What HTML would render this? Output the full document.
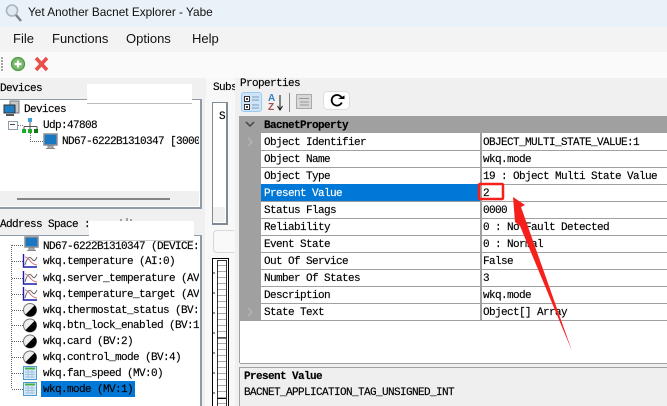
<!DOCTYPE html>
<html><head><meta charset="utf-8">
<style>
html,body{margin:0;padding:0;width:667px;height:406px;overflow:hidden;background:#f0f0f0}
#r{position:relative;width:667px;height:406px;overflow:hidden;background:#f0f0f0}
.a{position:absolute}
.m{position:absolute;margin-top:1px;font-family:"Liberation Mono",monospace;font-size:11px;letter-spacing:-.6px;line-height:14px;height:14px;color:#000;white-space:pre;-webkit-text-stroke:.15px #000}
.s{position:absolute;font-family:"Liberation Sans",sans-serif;color:#111;white-space:pre}
.line{position:absolute;background:#a0a0a0}
svg{position:absolute;overflow:visible}
.b{font-weight:bold}
</style></head><body><div id="r">
<div class="a" style="left:0;top:0;width:667px;height:27px;background:#e9f2f9"></div>
<div class="a" style="left:0;top:27px;width:667px;height:25px;background:#f3f3f3"></div>
<div class="a" style="left:0;top:52px;width:667px;height:26px;background:#fafafa"></div>

<svg style="left:4px;top:3px" width="18" height="20" viewBox="0 0 18 20"><circle cx="8" cy="7.5" r="5.5" fill="#dfe9f0" stroke="#a9b4bc" stroke-width="1.6"/><path d="M12 12l5 6" stroke="#7d8288" stroke-width="2.5"/></svg>
<div class="s" style="left:28px;top:4px;font-size:11.8px;line-height:16px">Yet Another Bacnet Explorer - Yabe</div>
<div class="s" style="left:13px;top:31px;font-size:13px;line-height:16px">File</div>
<div class="s" style="left:52px;top:31px;font-size:13px;line-height:16px">Functions</div>
<div class="s" style="left:126px;top:31px;font-size:13px;line-height:16px">Options</div>
<div class="s" style="left:192px;top:31px;font-size:13px;line-height:16px">Help</div>

<svg style="left:0;top:52px" width="60" height="26" viewBox="0 0 60 26">
<path d="M2 5v14" stroke="#a8a8a8" stroke-width="2" stroke-dasharray="2 1"/>
<circle cx="18" cy="12" r="6.5" fill="#79b96c" stroke="#4f9a48" stroke-width="1.3"/>
<path d="M14.5 12h7M18 8.500v7" stroke="#fff" stroke-width="2.2"/>
<path d="M36 6l11 12M47 6L36 18" stroke="#e8504c" stroke-width="3.6"/>
</svg>

<!-- Devices panel -->
<div class="m" style="left:0;top:81px">Devices</div>
<div class="a" style="left:0;top:99px;width:200px;height:107px;background:#fff;border-top:1px solid #8f9ba6;border-right:2px solid #8f9ba6;border-bottom:2px solid #8f9ba6"></div>
<div class="a" style="left:0;top:191px;width:199px;height:15px;background:#f0f0f0"></div>
<div class="a" style="left:17px;top:198px;width:153px;height:2px;background:#858585"></div>
<div class="a" style="left:87px;top:84px;width:105px;height:19px;background:#fff;box-shadow:0 1px 0 #bbb"></div>

<svg style="left:3px;top:100px" width="17" height="17" viewBox="0 0 17 17"><rect x="7" y="1" width="9" height="12" fill="#c9c9c9" stroke="#777"/><rect x="1" y="5" width="11" height="8" fill="#1e7fc4" stroke="#333"/><path d="M3 15h8" stroke="#555" stroke-width="2"/></svg>
<div class="m" style="left:24px;top:102px">Devices</div>
<div class="a" style="left:8px;top:121px;width:8px;height:7px;border:1px solid #8f9ba6;background:#fff"></div>
<div class="a" style="left:10px;top:124px;width:5px;height:1px;background:#445"></div>
<svg style="left:17px;top:117px" width="25" height="17" viewBox="0 0 25 17"><path d="M1 8.500h5" stroke="#777" stroke-dasharray="1 1"/><rect x="11" y="1" width="4" height="4" fill="#3b9fe0"/><path d="M13 5v4M7 9.500h13M7 9.500v3M13 9.500v3M20 9.500v3" stroke="#555"/><rect x="5" y="12" width="4" height="4" fill="#1dab2a"/><rect x="11" y="12" width="4" height="4" fill="#1dab2a"/><rect x="17" y="12" width="4" height="4" fill="#0c7a18"/></svg>
<div class="m" style="left:43px;top:118px">Udp:47808</div>
<svg style="left:30px;top:133px" width="30" height="18" viewBox="0 0 30 18"><path d="M.5 0v8.500H13" stroke="#666" stroke-dasharray="1 1" fill="none"/><rect x="14" y="1" width="13" height="11" fill="#1a78c2" stroke="#8a8f96" stroke-width="1.500"/><path d="M18 13h5v2h-5z" stroke="#888" fill="#ccc"/><path d="M16 15.500h9" stroke="#888"/></svg>
<div class="m" style="left:62px;top:134px;width:137px;overflow:hidden">ND67-6222B1310347 [3000</div>

<!-- Address space -->
<div class="m" style="left:0;top:217px">Address Space :</div>
<div class="a" style="left:0;top:235px;width:200px;height:171px;background:#fff;border-top:1px solid #8f9ba6;border-right:2px solid #8f9ba6"></div>
<svg style="left:118px;top:217px" width="16" height="5"><path d="M3 2v2M9 1v3M13 2v2" stroke="#555"/></svg>
<div class="a" style="left:89px;top:221px;width:105px;height:19px;background:#fff;box-shadow:0 1px 0 #ccc"></div>

<svg style="left:0;top:235px" width="42" height="171" viewBox="0 0 42 171">
<path d="M11.500 10V154M12 10.500H23M12 26.500H23M12 43.500H23M12 59.500H23M12 75.500H23M12 90.500H23M12 106.500H23M12 122.500H23M12 138.500H23M12 154.500H23" stroke="#666" stroke-dasharray="1 1" fill="none"/>
<g><rect x="25" y="2" width="13" height="10" fill="#1a78c2" stroke="#8a8f96" stroke-width="1.500"/><path d="M29 13h5v2h-5z" stroke="#888" fill="#ccc"/><path d="M27 15.500h9" stroke="#888"/></g>
<g fill="none"><path d="M23.500 19v13H37" stroke="#1c1ca8" stroke-width="1.400"/><path d="M25 30c2-8 5-9 7-6s3 2 5-2" stroke="#666"/><path d="M25 22c4 0 6 8 12 8" stroke="#c77"/></g>
<g fill="none"><path d="M23.500 36v13H37" stroke="#1c1ca8" stroke-width="1.400"/><path d="M25 47c2-8 5-9 7-6s3 2 5-2" stroke="#666"/><path d="M25 39c4 0 6 8 12 8" stroke="#c77"/></g>
<g fill="none"><path d="M23.500 52v13H37" stroke="#1c1ca8" stroke-width="1.400"/><path d="M25 63c2-8 5-9 7-6s3 2 5-2" stroke="#666"/><path d="M25 55c4 0 6 8 12 8" stroke="#c77"/></g>
<g stroke="#777"><circle cx="30" cy="75" r="6.500" fill="#eee"/><path d="M25.400 79.600A6.500 6.500 0 0 0 34.600 70.400Z" fill="#000" stroke="none"/>
<circle cx="30" cy="90.500" r="6.500" fill="#eee"/><path d="M25.400 95.100A6.500 6.500 0 0 0 34.600 85.900Z" fill="#000" stroke="none"/>
<circle cx="30" cy="106.500" r="6.500" fill="#eee"/><path d="M25.400 111.100A6.500 6.500 0 0 0 34.600 101.900Z" fill="#000" stroke="none"/>
<circle cx="30" cy="122.500" r="6.500" fill="#eee"/><path d="M25.400 127.100A6.500 6.500 0 0 0 34.600 117.900Z" fill="#000" stroke="none"/></g>
<g><rect x="23.500" y="131.500" width="13" height="13" fill="#dcebf7" stroke="#4b9ad0"/><path d="M25 133.500h10" stroke="#45b045" stroke-width="2"/><path d="M25 137h10M25 139.500h10M25 142h10M28 135v8M32 135v8" stroke="#9cc3e2"/></g>
<g><rect x="23.500" y="147.500" width="13" height="13" fill="#dcebf7" stroke="#4b9ad0"/><path d="M25 149.500h10" stroke="#45b045" stroke-width="2"/><path d="M25 153h10M25 155.500h10M25 158h10M28 151v8M32 151v8" stroke="#9cc3e2"/></g>
</svg>

<div class="m" style="left:43px;top:239px;width:156px;overflow:hidden">ND67-6222B1310347 (DEVICE:</div>
<div class="m" style="left:43px;top:254px">wkq.temperature (AI:0)</div>
<div class="m" style="left:43px;top:271px;width:156px;overflow:hidden">wkq.server_temperature (AV</div>
<div class="m" style="left:43px;top:287px;width:156px;overflow:hidden">wkq.temperature_target (AV</div>
<div class="m" style="left:43px;top:303px;width:156px;overflow:hidden">wkq.thermostat_status (BV:</div>
<div class="m" style="left:43px;top:318px;width:156px;overflow:hidden">wkq.btn_lock_enabled (BV:1</div>
<div class="m" style="left:43px;top:334px">wkq.card (BV:2)</div>
<div class="m" style="left:43px;top:350px">wkq.control_mode (BV:4)</div>
<div class="m" style="left:43px;top:366px">wkq.fan_speed (MV:0)</div>
<div class="a" style="left:41px;top:381px;width:94px;height:16px;background:#0078d7"></div>
<div class="m" style="left:43px;top:382px">wkq.mode (MV:1)</div>

<!-- Middle -->
<div class="a" style="left:205px;top:98px;width:30px;height:308px;background:#f8f8f8"></div>
<div class="a" style="left:206px;top:78px;width:29px;height:21px;background:#f8f8f8"></div>
<div class="m" style="left:213px;top:80px;width:22px;overflow:hidden">Subs</div>
<div class="a" style="left:212px;top:102px;width:13px;height:120px;background:#fff;border:1px solid #808a94;border-width:1px 2px 2px 1px"></div>
<div class="a" style="left:213px;top:207px;width:12px;height:15px;background:#f0f0f0"></div>
<div class="m" style="left:219px;top:109px">S</div>
<div class="a" style="left:213px;top:230px;width:20px;height:21px;background:#f9f9f9;border:1px solid #d8d8d8;border-right:0;border-radius:4px 0 0 4px"></div>
<div class="a" style="left:212px;top:258px;width:15px;height:148px;border:1px solid #000;border-bottom:0;background:#fff"></div>
<div class="a" style="left:217px;top:260px;width:8px;height:146px;border:1px solid #333;border-bottom:0;background:repeating-linear-gradient(#fff 0 4px,#aaa 4px 5px,#fff 5px 6px)"></div>
<svg style="left:212px;top:258px" width="16" height="148"><path d="M1 15h2M1 35h2M1 55h2M1 75h2M1 95h2M1 115h2M1 135h2" stroke="#222"/><path d="M5 80h9M5 140.500h9" stroke="#000"/></svg>

<!-- Properties -->
<div class="m" style="left:240px;top:76px">Properties</div>
<div class="a" style="left:241px;top:92px;width:21px;height:20px;background:#cfe5f7;border:1px solid #9ccbf0;border-radius:3px;box-sizing:border-box"></div>
<svg style="left:241px;top:92px" width="130" height="21" viewBox="0 0 130 21">
<rect x="3.500" y="4.500" width="5" height="5" fill="#fff" stroke="#333"/><rect x="3.500" y="12.500" width="5" height="5" fill="#fff" stroke="#333"/>
<path d="M5 7h2M6 6v2M5 15h2M6 14v2" stroke="#000"/>
<path d="M11 5h7M11 8h7M11 13h7M11 16h7" stroke="#7d9bb5"/>
<text x="27" y="9" font-family="Liberation Sans" font-size="10" font-weight="bold" fill="#3a7fc1">A</text>
<text x="27" y="18" font-family="Liberation Sans" font-size="10" font-weight="bold" fill="#a05050">Z</text>
<path d="M39 3v14M36.500 14l2.500 4 2.500-4" stroke="#111" fill="none"/>
<path d="M48.500 1v19" stroke="#888"/>
<rect x="55.500" y="2.500" width="15" height="14" fill="#d8d8d8" stroke="#aaa"/><path d="M58 6.500h10M59 10h9M59 13h9" stroke="#999"/>
<rect x="82.500" y="-.5" width="26" height="18" rx="4" fill="#fff" stroke="#ddd"/>
<path d="M100.500 5.500A5.300 5.300 0 1 0 100.800 10.500" fill="none" stroke="#000" stroke-width="1.800"/><path d="M97 7h6.500V3.500z" fill="#000"/>
</svg>

<div class="a" style="left:240px;top:116px;width:427px;height:247px;background:#fff"></div>
<div class="a" style="left:239px;top:116px;width:1px;height:247px;background:#a0a0a0"></div>
<div class="a" style="left:240px;top:116px;width:427px;height:17px;background:#a0a0a0"></div>
<div class="a" style="left:240px;top:133px;width:21px;height:188px;background:#a0a0a0"></div>
<svg style="left:240px;top:116px" width="21" height="205" viewBox="0 0 21 205"><path d="M6 6l4 4 4-4" stroke="#444" stroke-width="1.500" fill="none"/><path d="M8 22l4 4-4 4M8 192l4 4-4 4" stroke="#b4b4b4" stroke-width="1.500" fill="none"/></svg>
<div class="m b" style="left:264px;top:118px">BacnetProperty</div>

<div class="line" style="left:261px;top:150px;width:406px;height:1px"></div>
<div class="line" style="left:261px;top:167px;width:406px;height:1px"></div>
<div class="line" style="left:261px;top:184px;width:406px;height:1px"></div>
<div class="line" style="left:261px;top:201px;width:406px;height:1px"></div>
<div class="line" style="left:261px;top:218px;width:406px;height:1px"></div>
<div class="line" style="left:261px;top:235px;width:406px;height:1px"></div>
<div class="line" style="left:261px;top:252px;width:406px;height:1px"></div>
<div class="line" style="left:261px;top:269px;width:406px;height:1px"></div>
<div class="line" style="left:261px;top:286px;width:406px;height:1px"></div>
<div class="line" style="left:261px;top:303px;width:406px;height:1px"></div>
<div class="line" style="left:240px;top:320px;width:427px;height:1px"></div>
<div class="line" style="left:480px;top:133px;width:1.5px;height:188px"></div>
<div class="a" style="left:261px;top:184px;width:219px;height:17px;background:#0078d7"></div>

<div class="m" style="left:264px;top:135px">Object Identifier</div>
<div class="m" style="left:264px;top:152px">Object Name</div>
<div class="m" style="left:264px;top:169px">Object Type</div>
<div class="m" style="left:264px;top:186px;color:#fff;-webkit-text-stroke:.15px #fff">Present Value</div>
<div class="m" style="left:264px;top:203px">Status Flags</div>
<div class="m" style="left:264px;top:220px">Reliability</div>
<div class="m" style="left:264px;top:237px">Event State</div>
<div class="m" style="left:264px;top:254px">Out Of Service</div>
<div class="m" style="left:264px;top:271px">Number Of States</div>
<div class="m" style="left:264px;top:288px">Description</div>
<div class="m" style="left:264px;top:305px">State Text</div>

<div class="m" style="left:483px;top:135px">OBJECT_MULTI_STATE_VALUE:1</div>
<div class="m" style="left:483px;top:152px">wkq.mode</div>
<div class="m" style="left:483px;top:169px">19 : Object Multi State Value</div>
<div class="m" style="left:483px;top:186px">2</div>
<div class="m" style="left:483px;top:203px">0000</div>
<div class="m" style="left:483px;top:220px">0 : No Fault Detected</div>
<div class="m" style="left:483px;top:237px">0 : Normal</div>
<div class="m" style="left:483px;top:254px">False</div>
<div class="m" style="left:483px;top:271px">3</div>
<div class="m" style="left:483px;top:288px">wkq.mode</div>
<div class="m" style="left:483px;top:305px">Object[] Array</div>

<div class="a" style="left:240px;top:363px;width:427px;height:1px;background:#a0a0a0"></div>
<div class="a" style="left:240px;top:367px;width:427px;height:39px;background:#efefef;border-top:1px solid #a0a0a0"></div>
<div class="a" style="left:239px;top:367px;width:1px;height:39px;background:#a0a0a0"></div>
<div class="m b" style="left:244px;top:369px">Present Value</div>
<div class="m" style="left:244px;top:385px">BACNET_APPLICATION_TAG_UNSIGNED_INT</div>

<svg style="left:0;top:0" width="667" height="406" viewBox="0 0 667 406">
<rect x="479" y="184" width="24" height="15" rx="1" fill="none" stroke="#f5201c" stroke-width="2.500"/>
<path d="M513 197L525 205L521 207L572 351L520 226L515 222Z" fill="#f5201c"/>
</svg>
</div></body></html>
